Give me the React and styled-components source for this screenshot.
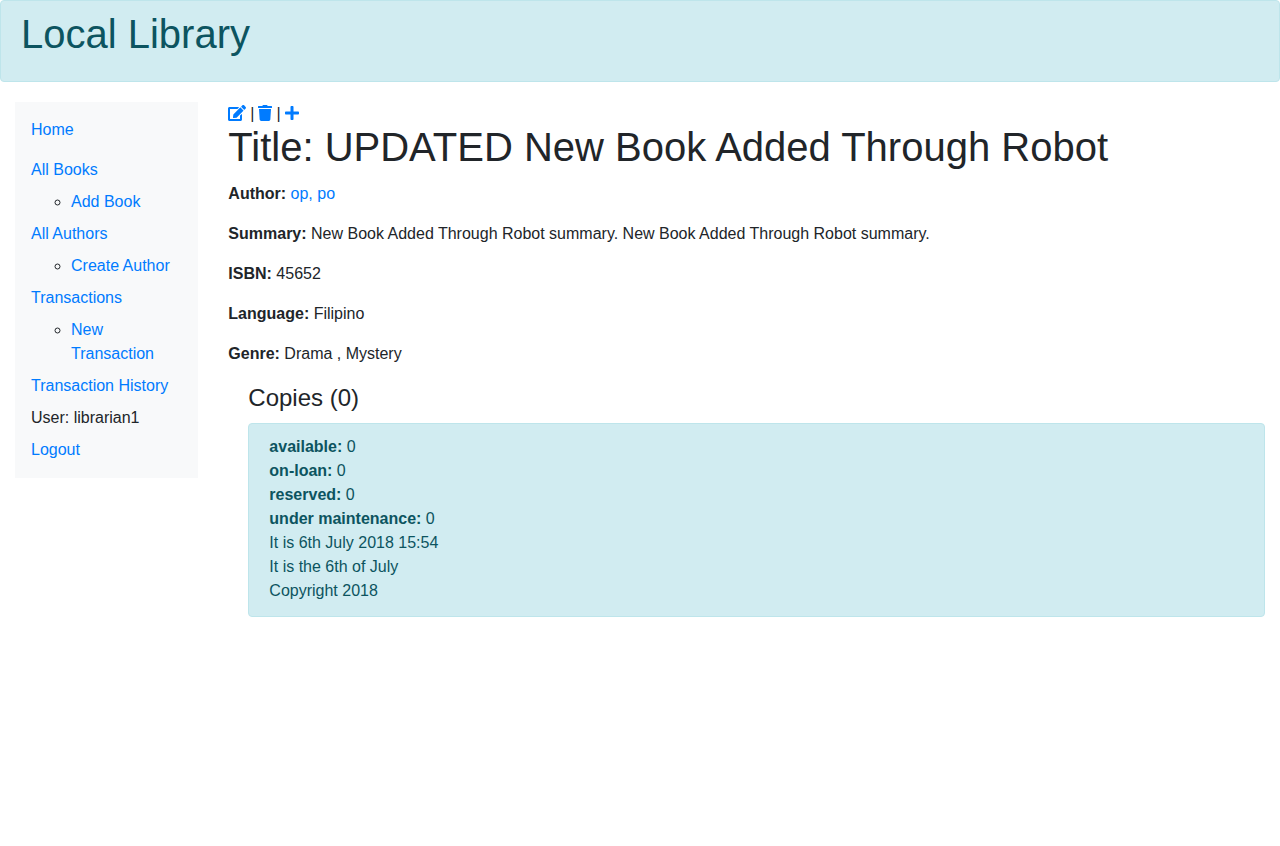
import React from 'react';
import styled, { createGlobalStyle } from 'styled-components';
import { FaEdit, FaTrash, FaPlus } from 'react-icons/fa';

const GlobalStyle = createGlobalStyle`
  *, *::before, *::after { box-sizing: border-box; }
  body {
    margin: 0;
    font-family: "Liberation Sans", Arial, sans-serif;
    font-size: 16px;
    line-height: 24px;
    color: #212529;
    background: #fff;
    text-rendering: optimizeSpeed;
  }
`;

const Alert = styled.div`
  padding: 11px 20px 13px;
  color: #0c5460;
  background: #d1ecf1;
  border: 1px solid #bee5eb;
  border-radius: 4px;
`;

const Banner = styled(Alert).attrs({ as: 'header' })`
  margin-bottom: 20px;
  padding: 12px 20px;
`;

const Heading = styled.h1`
  margin: 0;
  padding-bottom: 14px;
  font-size: 40px;
  font-weight: 500;
  line-height: 42px;
`;

const SubHeading = styled.h4`
  margin: 0 0 10px;
  font-size: 24px;
  font-weight: 500;
  line-height: 31px;
`;

const Columns = styled.div`
  display: flex;
  align-items: flex-start;
`;

const SideColumn = styled.div`
  flex: 0 0 16.6667%;
  padding: 0 15px;
`;

const Main = styled.main`
  flex: 1;
  min-width: 0;
  padding: 0 15px;
`;

const Nav = styled.nav`
  padding: 8px 16px 16px;
  background: #f8f9fa;
`;

const NavList = styled.ul`
  margin: 0;
  padding: 0;
  list-style: none;
`;

const NavItem = styled.li`
  padding: 8px 0 0;
  margin-bottom: ${(p) => (p.$spaced ? 8 : 0)}px;
`;

const SubList = styled.ul`
  margin: 0;
  padding-left: 40px;
  list-style: circle;
`;

const SubItem = styled.li`
  padding-top: 8px;
`;

const Link = styled.a`
  color: #007bff;
  text-decoration: none;
  &:hover { text-decoration: underline; }
`;

const Actions = styled.div`
  display: flex;
  gap: 4px;
`;

const IconLink = styled(Link)`
  svg {
    display: inline-block;
    height: 16px;
    width: ${(p) => p.$width}px;
    vertical-align: -2px;
  }
`;

const Field = styled.p`
  margin: 0 0 16px;
`;

const Copies = styled.section`
  margin-left: 20px;
`;

const menu = [
  { label: 'Home', spaced: true },
  { label: 'All Books', child: 'Add Book' },
  { label: 'All Authors', child: 'Create Author' },
  { label: 'Transactions', child: 'New Transaction' },
  { label: 'Transaction History' },
  { text: 'User: librarian1' },
  { label: 'Logout' },
];

const counts = ['available', 'on-loan', 'reserved', 'under maintenance'];

export default function App() {
  return (
    <>
      <GlobalStyle />
      <Banner>
        <Heading>Local Library</Heading>
      </Banner>
      <Columns>
        <SideColumn>
          <Nav>
            <NavList>
              {menu.map((item) => (
                <NavItem key={item.label || item.text} $spaced={item.spaced}>
                  {item.text || <Link href="#">{item.label}</Link>}
                  {item.child && (
                    <SubList>
                      <SubItem><Link href="#">{item.child}</Link></SubItem>
                    </SubList>
                  )}
                </NavItem>
              ))}
            </NavList>
          </Nav>
        </SideColumn>
        <Main>
          <Actions>
            <IconLink href="#" $width={18} aria-label="Edit book"><FaEdit /></IconLink>
            <span>|</span>
            <IconLink href="#" $width={14} aria-label="Delete book"><FaTrash /></IconLink>
            <span>|</span>
            <IconLink href="#" $width={14} aria-label="Add book"><FaPlus /></IconLink>
          </Actions>
          <Heading>Title: UPDATED New Book Added Through Robot</Heading>
          <Field><strong>Author:</strong> <Link href="#">op, po</Link></Field>
          <Field>
            <strong>Summary:</strong> New Book Added Through Robot summary. New Book Added Through Robot summary.
          </Field>
          <Field><strong>ISBN:</strong> 45652</Field>
          <Field><strong>Language:</strong> Filipino</Field>
          <Field><strong>Genre:</strong> Drama , Mystery</Field>
          <Copies>
            <SubHeading>Copies (0)</SubHeading>
            <Alert>
              {counts.map((name) => (
                <div key={name}><strong>{name}:</strong> 0</div>
              ))}
              <div>It is 6th July 2018 15:54</div>
              <div>It is the 6th of July</div>
              <div>Copyright 2018</div>
            </Alert>
          </Copies>
        </Main>
      </Columns>
    </>
  );
}
